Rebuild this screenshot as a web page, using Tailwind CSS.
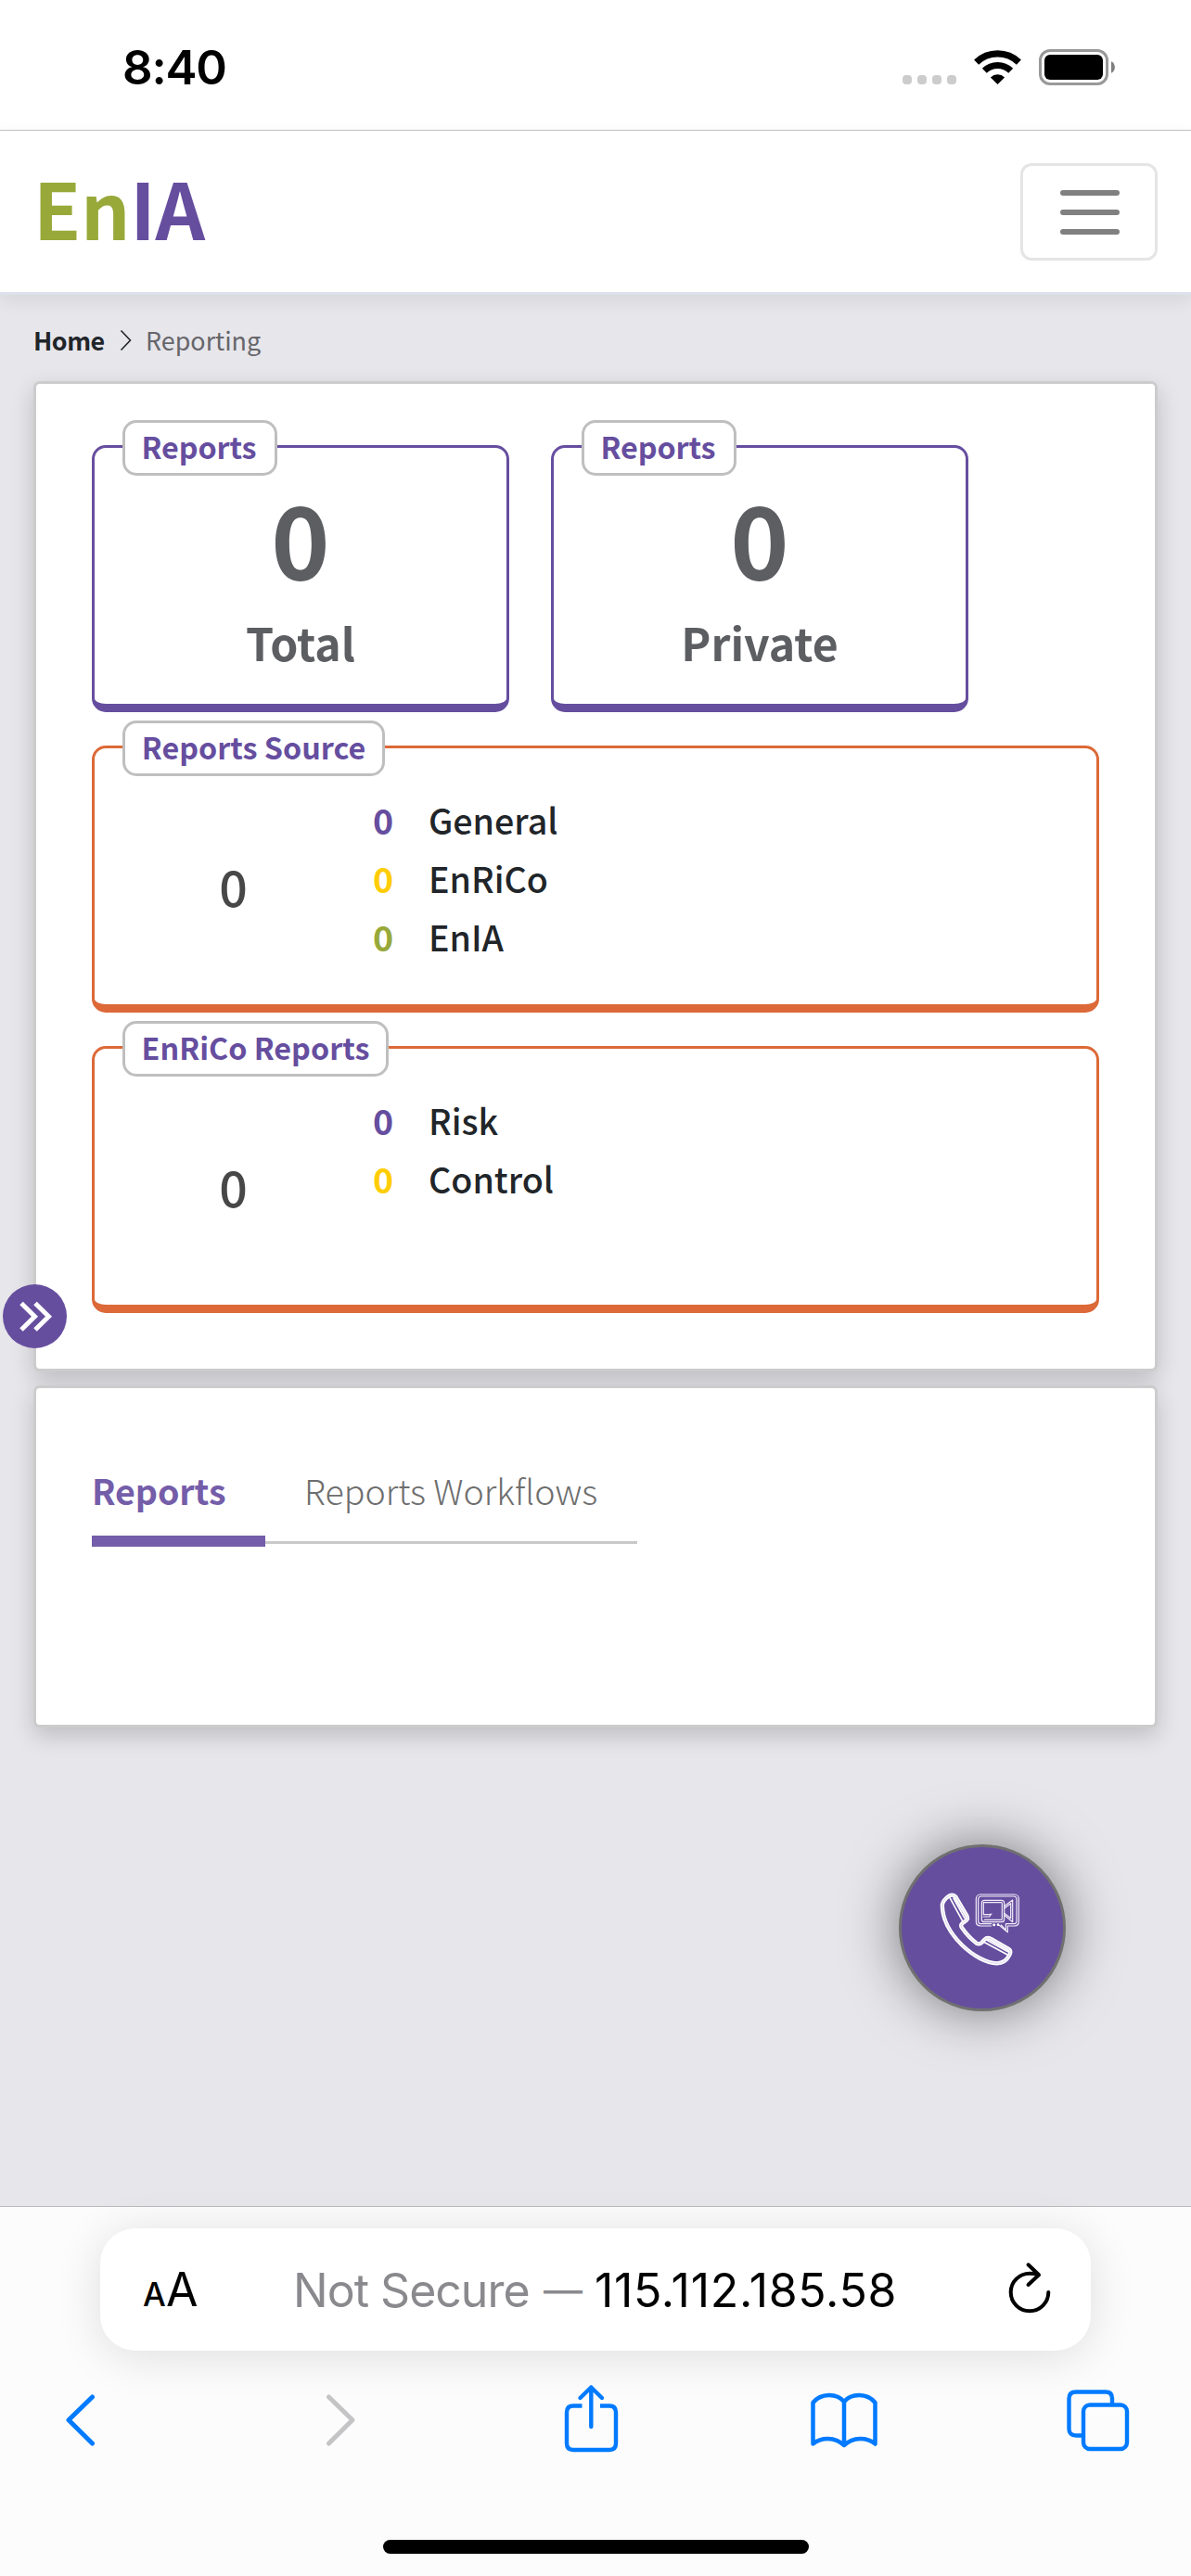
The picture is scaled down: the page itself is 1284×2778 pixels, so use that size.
<!DOCTYPE html>
<html lang="en">
<head>
<meta charset="utf-8">
<title>EnIA Reporting</title>
<script src="https://cdn.jsdelivr.net/npm/@tailwindcss/browser@4"></script>
</head>
<body class="w-[1284px] h-[2778px] overflow-hidden flex flex-col bg-[#e7e6eb] font-['Noto_Sans_CJK_JP','Noto_Sans_CJK_SC',sans-serif]">

  <!-- Status bar -->
  <header class="h-[141px] shrink-0 bg-white border-b border-[#c4c4c6] flex items-start justify-between pl-[132px] pr-[81px] pt-[42px] font-['Inter',sans-serif]">
    <span class="text-[51px] leading-[61px] font-semibold text-black tracking-[-1.2px]">8:40</span>
    <div class="flex pt-[11px]">
      <div class="flex gap-[6px] pt-[28px] mr-[19px]">
        <i class="size-[10px] rounded-[4px] bg-[#ccc]"></i><i class="size-[10px] rounded-[4px] bg-[#ccc]"></i><i class="size-[10px] rounded-[4px] bg-[#ccc]"></i><i class="size-[10px] rounded-[4px] bg-[#ccc]"></i>
      </div>
      <svg class="w-[51px] h-[39px] mr-[19px]" viewBox="0 0 51 39" fill="none" stroke="#000">
        <path d="M2.6 14.2A33 33 0 0 1 48.4 14.2" stroke-width="7.2"/>
        <path d="M11.3 23.2A20.3 20.3 0 0 1 39.7 23.2" stroke-width="7"/>
        <path d="M25.5 38L17.9 30.4A11 11 0 0 1 33.1 30.4Z" fill="#000" stroke="none"/>
      </svg>
      <svg class="w-[83px] h-[39px]" viewBox="0 0 83 39">
        <rect x="1.5" y="1.5" width="72" height="36" rx="10.5" fill="none" stroke="#999" stroke-width="3"/>
        <rect x="6" y="6" width="63" height="27" rx="6" fill="#000"/>
        <path d="M78 13.2C83.2 15.5 83.2 23.5 78 25.8Z" fill="#808080"/>
      </svg>
    </div>
  </header>

  <!-- Navbar -->
  <nav class="relative z-10 h-[177px] shrink-0 bg-white border-b-[3px] border-[#dde1eb] shadow-[0_6px_18px_rgba(0,0,0,0.08)] flex items-start justify-between pl-[36px] pr-[36px] pt-[35px]">
    <div class="pt-px text-[83.5px] leading-[91px] font-bold text-[#98a93a] tracking-[-0.3px]">En<span class="text-[#664e9f]">IA</span></div>
    <button class="w-[148px] h-[105px] rounded-[12px] border-[3px] border-[#e5e5e5] flex flex-col items-center justify-center gap-[15px] pl-[2px]">
      <i class="w-[64px] h-[6px] rounded-full bg-[#808080]"></i><i class="w-[64px] h-[6px] rounded-full bg-[#808080]"></i><i class="w-[64px] h-[6px] rounded-full bg-[#808080]"></i>
    </button>
  </nav>

  <main class="relative flex-1 px-[36px]">
    <div class="h-[93px] pt-[4px] flex items-center text-[26.9px] leading-[40px]">
      <a class="font-bold text-[#212529] tracking-[-0.5px] w-[93px]">Home</a>
      <svg class="w-[13px] h-[24px]" viewBox="0 0 13 24" fill="none" stroke="#212529" stroke-width="1.6"><path d="M1.5 1.5L11.5 12L1.5 22.5"/></svg>
      <span class="ml-[15px] text-[#66656a]">Reporting</span>
    </div>

    <!-- Counters -->
    <section class="h-[1068px] bg-white border-[3px] border-[#ccc] rounded-[7px] shadow-[0_9px_24px_rgba(0,0,0,0.18)] px-[60px] pt-[66px] flex flex-col gap-[36px]">
      <div class="flex gap-[45px]">
        <div class="relative w-[450px] h-[288px] border-[3px] border-b-[9px] border-[#664e9f] rounded-[15px] pt-[35px] text-center font-bold text-[#5c5e62]">
          <span class="absolute left-[30px] -top-[30px] h-[60px] w-[167px] pb-[3px] pr-[2px] flex items-center justify-center bg-white border-[3px] border-[#bfbfbf] rounded-[15px] text-[32.3px] tracking-[-0.1px] text-[#664e9f]">Reports</span>
          <div class="text-[107.4px] leading-[120px]">0</div>
          <div class="mt-[18px] text-[48.2px] leading-[72px]">Total</div>
        </div>
        <div class="relative w-[450px] h-[288px] border-[3px] border-b-[9px] border-[#664e9f] rounded-[15px] pt-[35px] text-center font-bold text-[#5c5e62]">
          <span class="absolute left-[30px] -top-[30px] h-[60px] w-[167px] pb-[3px] pr-[2px] flex items-center justify-center bg-white border-[3px] border-[#bfbfbf] rounded-[15px] text-[32.3px] tracking-[-0.1px] text-[#664e9f]">Reports</span>
          <div class="text-[107.4px] leading-[120px]">0</div>
          <div class="mt-[18px] text-[48.2px] leading-[72px]">Private</div>
        </div>
      </div>
      <div class="relative w-[1086px] h-[288px] border-[3px] border-b-[9px] border-[#dc6937] rounded-[15px] pt-[45px] flex items-start">
        <span class="absolute left-[30px] -top-[30px] h-[60px] w-[283px] pb-[3px] flex items-center justify-center bg-white border-[3px] border-[#bfbfbf] rounded-[15px] text-[32.3px] font-bold text-[#664e9f]">Reports Source</span>
        <div class="w-[299px] pt-[63px] text-center text-[53.7px] leading-[80px] font-medium text-[#474747]">0</div>
        <div class="grid grid-cols-[24px_auto] gap-x-[37px] text-[37.6px] leading-[63px] font-medium text-[#212529]">
          <b class="text-center text-[#664e9f]">0</b><span>General</span>
          <b class="text-center text-[#ffcd05]">0</b><span>EnRiCo</span>
          <b class="text-center text-[#98a93a]">0</b><span>EnIA</span>
        </div>
      </div>
      <div class="relative w-[1086px] h-[288px] border-[3px] border-b-[9px] border-[#dc6937] rounded-[15px] pt-[45px] flex items-start">
        <span class="absolute left-[30px] -top-[30px] h-[60px] w-[287px] pb-[3px] flex items-center justify-center bg-white border-[3px] border-[#bfbfbf] rounded-[15px] text-[32.3px] font-bold text-[#664e9f]">EnRiCo Reports</span>
        <div class="w-[299px] pt-[63px] text-center text-[53.7px] leading-[80px] font-medium text-[#474747]">0</div>
        <div class="grid grid-cols-[24px_auto] gap-x-[37px] text-[37.6px] leading-[63px] font-medium text-[#212529]">
          <b class="text-center text-[#664e9f]">0</b><span>Risk</span>
          <b class="text-center text-[#ffcd05]">0</b><span>Control</span>
        </div>
      </div>
    </section>

    <!-- Tabs -->
    <section class="mt-[15px] h-[369px] bg-white border-[3px] border-[#ccc] rounded-[7px] shadow-[0_9px_24px_rgba(0,0,0,0.18)] px-[60px] pt-[78px]">
      <div class="flex items-start text-[37.6px] leading-[63px]">
        <div class="w-[187px] h-[93px] border-b-[12px] border-[#745da9] font-bold text-[#745da9] tracking-[-0.1px]">Reports</div>
        <div class="w-[401px] h-[90px] border-b-[3px] border-[#c9c9c9] pl-[42px] font-light text-[#6e6e6e] whitespace-nowrap">Reports Workflows</div>
      </div>
    </section>

    <!-- Sidebar toggle floating over the card edge -->
    <button class="absolute left-[3px] top-[1067px] size-[69px] rounded-full bg-[#664e9f] flex items-center justify-center">
      <svg class="w-[69px] h-[69px]" viewBox="0 0 69 69" fill="none" stroke="#fff" stroke-width="5"><path d="M20 20.5L34.5 34.7L20 49M35 20.5L49.5 34.7L35 49"/></svg>
    </button>

    <!-- Floating call button -->
    <button class="absolute left-[969px] top-[1671px] size-[180px] rounded-full bg-[#664e9f] border-[3px] border-[#707070] shadow-[0_0_60px_rgba(0,0,0,0.5)] flex items-center justify-center">
      <svg class="size-[100px]" viewBox="267 267 300 300" fill="none" stroke-linejoin="round" stroke-linecap="round">
        <path stroke="#fff" stroke-width="13" d="M287.500 345C288 332 296 324 306 316C315 309 325 309 331 317L366 376C372 386 369 392 360 397C349 403 345 408 352 418C365 437 380 453 397 466C403 470 410 470 415 465L424 455C430 449 437 448 445 453L501 485C508 489 509 497 505 505C496 523 483 532 464 532C398 530 290 440 287.500 345Z"/>
        <path d="M287.500 345C288 332 296 324 306 316C315 309 325 309 331 317L366 376C372 386 369 392 360 397C349 403 345 408 352 418C365 437 380 453 397 466C403 470 410 470 415 465L424 455C430 449 437 448 445 453L501 485C508 489 509 497 505 505C496 523 483 532 464 532C398 530 290 440 287.500 345Z" stroke="#c9bfe0" stroke-width="2"/>
        <path d="M312 320L353 395M324 321L360 386M422 463L497 503M432 457L500 494" stroke="#fff" stroke-width="5"/>
        <g stroke="#f0ecf8" stroke-width="3.600">
          <path d="M446 411H412C403 411 397 405 397 397V323C397 315 403 309 411 309H521C529 309 535 315 535 323V397C535 406 529 411 521 411H499V431L472 409"/>
          <path d="M446 404H414C408 404 404 401 404 395V325C404 319 408 315 414 315H518C524 315 528 319 528 325V395C528 401 524 404 518 404H493V424L478 408"/>
          <rect x="415" y="328" width="73" height="70" rx="9"/>
          <path d="M488 347L515 327V398L488 376M488 354L509 338V386L488 370M421 335H480M421 335V374H440L447 372M421 381H440L444 375M424 391H480M481 338V388"/>
        </g>
        <g fill="#fff"><circle cx="455" cy="407" r="4.500"/><circle cx="468" cy="407" r="4"/></g>
      </svg>
    </button>
  </main>

  <!-- Browser toolbar -->
  <footer class="relative h-[399px] shrink-0 border-t border-[#bbbabf] bg-[#fcfcfc] flex flex-col items-center pt-[23px] font-['Inter',sans-serif]">
    <div class="w-[1068px] h-[132px] shrink-0 rounded-[38px] bg-white shadow-[0_6px_50px_rgba(0,0,0,0.12)] flex items-center pl-[46px] pr-[41px] text-[50px] leading-[60px] whitespace-nowrap">
      <div class="w-[162px] pt-[5px] text-black flex items-baseline"><span class="text-[35px] font-medium w-[25px]">A</span><span class="text-[50px]">A</span></div>
      <span class="pt-[2px] text-[#8a8a8e] w-[270px] tracking-[-1px]">Not Secure</span>
      <span class="pt-[2px] text-[#8a8a8e] w-[55px] text-[42px]">—</span>
      <span class="pt-[2px] text-black tracking-[0.7px]">115.112.185.58</span>
      <svg class="ml-auto w-[50px] h-[60px]" viewBox="0 0 50 60" fill="none" stroke="#000" stroke-width="4" stroke-linecap="round" stroke-linejoin="round"><path d="M45.300 33A20.300 20.300 0 1 1 25 12.700Q30 12.700 34.500 14M23.500 3.300L35 14.300L23.500 25"/></svg>
    </div>
    <div class="w-full h-[80px] mt-[34px] flex items-center pl-[70px]">
      <svg class="w-[32px] h-[80px]" viewBox="0 0 32 80" fill="none" stroke="#007aff" stroke-width="5" stroke-linecap="round" stroke-linejoin="round"><path d="M29.500 16L4 40.800L29.500 66"/></svg>
      <svg class="ml-[248px] w-[34px] h-[80px]" viewBox="0 0 34 80" fill="none" stroke="#c4c4c6" stroke-width="5" stroke-linecap="round" stroke-linejoin="round"><path d="M4.500 16L30 40.800L4.500 66"/></svg>
      <svg class="ml-[223px] w-[60px] h-[80px]" viewBox="0 0 60 80" fill="none" stroke="#007aff" stroke-width="4.400" stroke-linejoin="round"><path d="M20.500 25.500H11Q4 25.500 4 32.500V66Q4 73 11 73H50Q57 73 57 66V32.500Q57 25.500 50 25.500H40"/><path d="M30.300 48V5.500M18.500 17L30.300 5.500L42 17" stroke-linecap="round"/></svg>
      <svg class="ml-[206px] w-[74px] h-[80px]" viewBox="0 0 74 80" fill="none" stroke="#007aff" stroke-width="4.500" stroke-linejoin="round"><path d="M37 68V21C29 11.500 12 11.500 3.500 22V66.500C13 59 27 59 37 68C47 59 61 59 70.500 66.500V22C62 11.500 45 11.500 37 21"/></svg>
      <svg class="ml-[202px] w-[70px] h-[80px]" viewBox="0 0 70 80" fill="none" stroke="#007aff" stroke-width="4.400"><path d="M18 57.500H11Q3.500 57.500 3.500 50.500V17.500Q3.500 10.500 11 10.500H43Q50 10.500 50 17.500V24"/><rect x="19" y="24.500" width="47" height="47.500" rx="7"/></svg>
    </div>
    <div class="mt-[90px] w-[459px] h-[15px] rounded-full bg-black"></div>
  </footer>
</body>
</html>
